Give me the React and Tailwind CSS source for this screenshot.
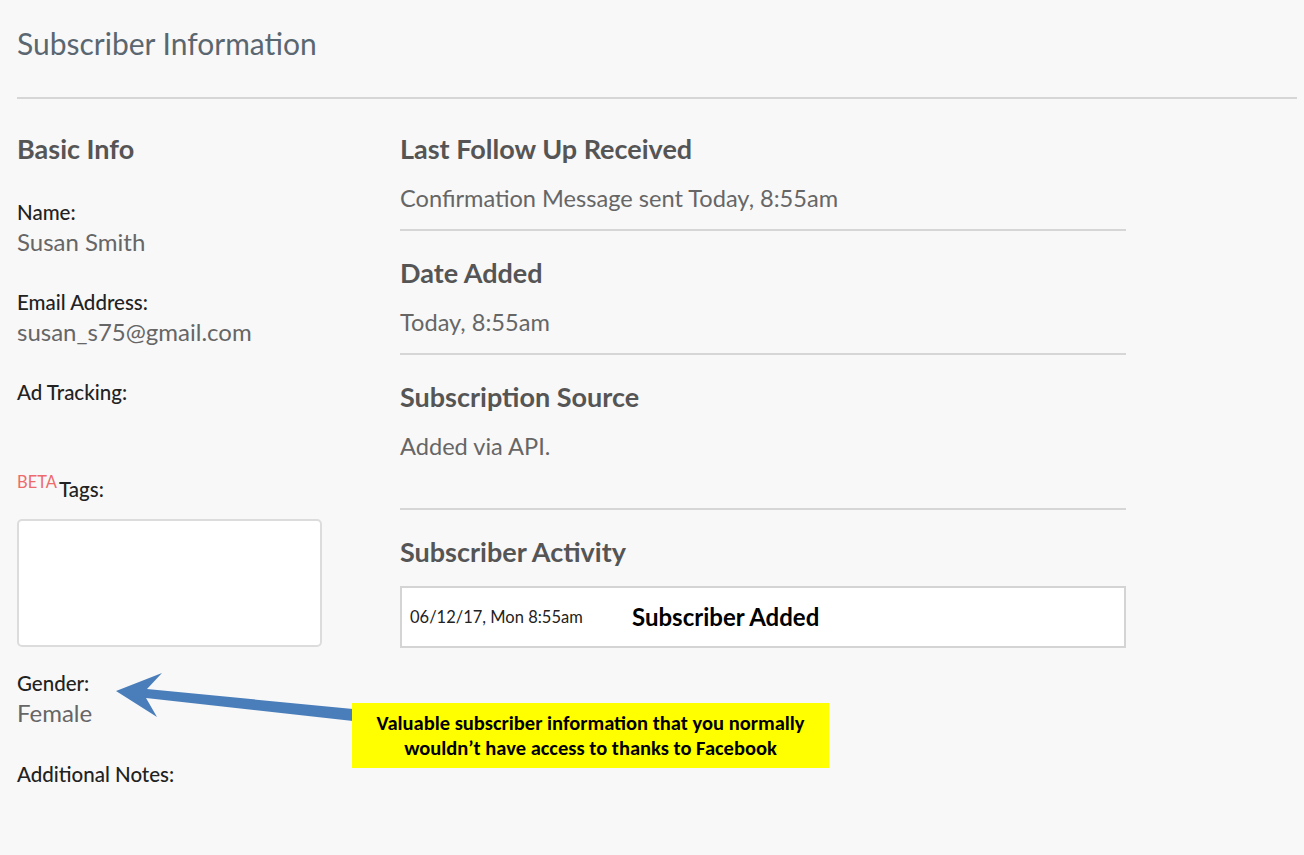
import React from "react";

const font = { fontFamily: "Lato, 'Open Sans', sans-serif" };

function Label({ children }) {
  return <div className="text-[20.5px] leading-[28px] text-[#222] font-medium">{children}</div>;
}
function Value({ children }) {
  return <div className="text-[24px] leading-[32px] text-[#666]">{children}</div>;
}
function Heading({ children, className = "" }) {
  return <h2 className={"text-[27px] leading-[34px] font-bold text-[#555] " + className}>{children}</h2>;
}
function Body({ children, className = "" }) {
  return <div className={"text-[23.6px] leading-[30px] text-[#666] " + className}>{children}</div>;
}

export default function App() {
  return (
    <div className="relative w-[1304px] h-[855px] bg-[#f8f8f8] overflow-hidden" style={font}>
      <div className="px-[17px] pt-[25px]">
        <h1 className="text-[30px] leading-[36px] text-[#5b6770] font-normal">Subscriber Information</h1>
        <div className="mt-[36px] w-[1280px] h-[2px] bg-[#d6d6d6]" />
      </div>

      <div className="flex px-[17px] pt-[33px]">
        {/* Left column */}
        <div className="w-[383px] shrink-0">
          <Heading>Basic Info</Heading>
          <div className="mt-[32px]">
            <Label>Name:</Label>
            <Value>Susan Smith</Value>
          </div>
          <div className="mt-[30px]">
            <Label>Email Address:</Label>
            <Value>susan_s75@gmail.com</Value>
          </div>
          <div className="mt-[30px]">
            <Label>Ad Tracking:</Label>
          </div>
          <div className="mt-[69px] flex items-start">
            <span className="text-[16.5px] leading-[16px] text-[#ee6b6b] mt-[-1px]">BETA</span>
            <span className="text-[20.5px] leading-[28px] text-[#222] font-medium ml-[2px]">Tags:</span>
          </div>
          <div className="mt-[16px] w-[305px] h-[128px] bg-white border-2 border-[#dcdcdc] rounded-[5px]" />
          <div className="mt-[22px]">
            <Label>Gender:</Label>
            <Value>Female</Value>
          </div>
          <div className="mt-[31px]">
            <Label>Additional Notes:</Label>
          </div>
        </div>

        {/* Right column */}
        <div className="w-[726px]">
          <Heading>Last Follow Up Received</Heading>
          <Body className="mt-[17px]">Confirmation Message sent Today, 8:55am</Body>
          <div className="mt-[16px] h-[2px] bg-[#d6d6d6]" />
          <Heading className="mt-[25px]">Date Added</Heading>
          <Body className="mt-[17px]">Today, 8:55am</Body>
          <div className="mt-[16px] h-[2px] bg-[#d6d6d6]" />
          <Heading className="mt-[25px]">Subscription Source</Heading>
          <Body className="mt-[17px]">Added via API.</Body>
          <div className="mt-[47px] h-[2px] bg-[#d6d6d6]" />
          <Heading className="mt-[25px]">Subscriber Activity</Heading>
          <div className="mt-[17px] h-[62px] bg-white border-2 border-[#d4d4d4] flex items-center pl-[8px]">
            <span className="w-[222px] text-[16.5px] text-[#222]">06/12/17, Mon 8:55am</span>
            <span className="text-[24px] font-bold text-black">Subscriber Added</span>
          </div>
        </div>
      </div>

      {/* Arrow annotation */}
      <svg className="absolute left-0 top-0 pointer-events-none" width="1304" height="855" viewBox="0 0 1304 855">
        <path
          d="M116 691 L162 673 L147 689 L353 709 L353 721 L146 698 L157 717 Z"
          fill="#4a7ebb"
          strokeLinejoin="round"
        />
      </svg>
      <div
        className="absolute left-[352px] top-[703px] w-[477px] h-[65px] bg-[#ffff00] flex flex-col items-center justify-center text-[20.5px] leading-[25px] font-bold text-black"
        style={{ fontFamily: "Carlito, 'Liberation Sans Narrow', 'Open Sans', sans-serif" }}
      >
        <div>Valuable subscriber information that you normally</div>
        <div>wouldn’t have access to thanks to Facebook</div>
      </div>
    </div>
  );
}
